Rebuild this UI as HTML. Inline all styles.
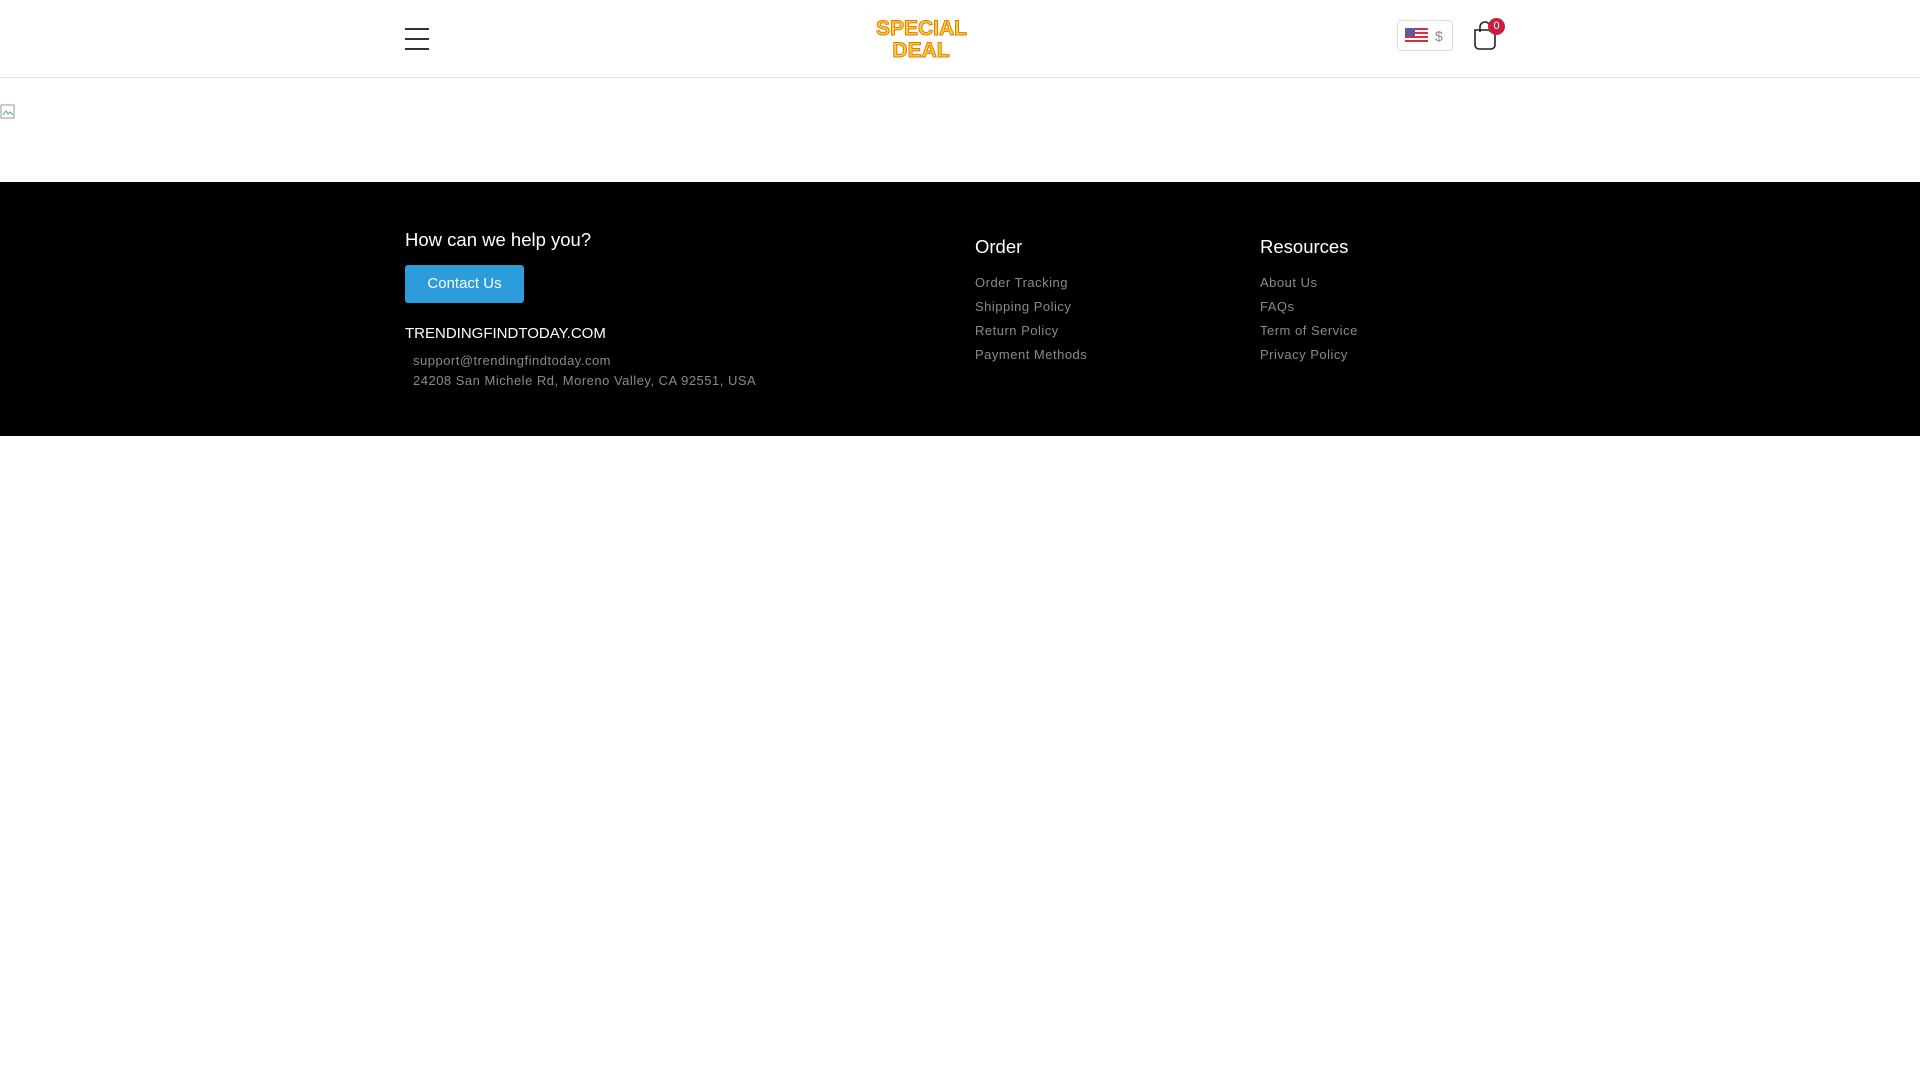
<!DOCTYPE html>
<html><head><meta charset="utf-8"><style>
body{margin:0;background:#fff;font-family:"Liberation Sans",Arial,sans-serif;width:1920px;height:1080px;position:relative;overflow:hidden}
.a{position:absolute;white-space:nowrap}
header{position:absolute;left:0;top:0;width:1920px;height:77px;border-bottom:1px solid #e3e3e3}
.ham{left:405px;top:28px;width:24px}
.ham i{display:block;height:2px;background:#333;margin-bottom:8px}
.logo{left:876px;top:18px;font:bold 21px/22px "Liberation Sans",sans-serif;text-align:center;width:90px;letter-spacing:0;-webkit-text-stroke:1px #e07a00;color:#ffd040}
.cur{left:1397px;top:20px;width:56px;height:31px;border:1px solid #ddd;border-radius:4px;box-sizing:border-box}
footer{position:absolute;left:0;top:182px;width:1920px;height:254px;background:#000}
.h{color:#fff;font-size:18.5px}
.l{color:#8a8a8a;font-size:13px;letter-spacing:.5px}
.btn{left:405px;top:265px;width:119px;height:38px;background:#2d9cdb;border-radius:3px;color:#fff;font-size:15px;line-height:38px;text-align:center}
</style></head><body>
<header>
<div class="a ham"><i></i><i></i><i></i></div>
<div class="a logo">SPECIAL<br>DEAL</div>
<div class="a cur">
<svg class="a" style="left:7px;top:7px" width="23" height="16" viewBox="0 0 23 16"><rect width="23" height="16" fill="#fff"/><g fill="#d5303e"><rect y="0" width="23" height="2"/><rect y="4" width="23" height="2"/><rect y="8" width="23" height="2"/><rect y="12" width="23" height="2"/></g><rect width="10" height="8" fill="#5a5aa8"/></svg>
<span class="a" style="left:37px;top:7px;color:#888;font-size:14px">$</span></div>
<svg class="a" style="left:1472px;top:20px" width="26" height="30" viewBox="0 0 26 30" fill="none" stroke="#222" stroke-width="1.6"><path d="M3 10h20v15a4 4 0 0 1-4 4H7a4 4 0 0 1-4-4z"/><path d="M8 12V7a5 5 0 0 1 10 0v5"/></svg>
<div class="a" style="left:1488px;top:18px;width:17px;height:17px;border-radius:50%;background:#c8203f;color:#fff;font-size:11px;line-height:17px;text-align:center">0</div>
</header>
<svg class="a" style="left:0;top:104px" width="16" height="16" viewBox="0 0 16 16"><rect x="1" y="1" width="13" height="13" fill="#fff" stroke="#999"/><path d="M3 11l3-4 2 3 2-2 3 3" stroke="#4a9" fill="none"/></svg>
<footer>
<div class="a h" style="left:405px;top:47px">How can we help you?</div>
<div class="a btn" style="top:83px">Contact Us</div>
<div class="a" style="left:405px;top:143px;color:#fff;font-size:15px">TRENDINGFINDTODAY.COM</div>
<div class="a l" style="left:413px;top:171px">support@trendingfindtoday.com</div>
<div class="a l" style="left:413px;top:191px">24208 San Michele Rd, Moreno Valley, CA 92551, USA</div>
<div class="a h" style="left:975px;top:54px">Order</div>
<div class="a l" style="left:975px;top:93px">Order Tracking</div>
<div class="a l" style="left:975px;top:117px">Shipping Policy</div>
<div class="a l" style="left:975px;top:141px">Return Policy</div>
<div class="a l" style="left:975px;top:165px">Payment Methods</div>
<div class="a h" style="left:1260px;top:54px">Resources</div>
<div class="a l" style="left:1260px;top:93px">About Us</div>
<div class="a l" style="left:1260px;top:117px">FAQs</div>
<div class="a l" style="left:1260px;top:141px">Term of Service</div>
<div class="a l" style="left:1260px;top:165px">Privacy Policy</div>
</footer>
</body></html>
